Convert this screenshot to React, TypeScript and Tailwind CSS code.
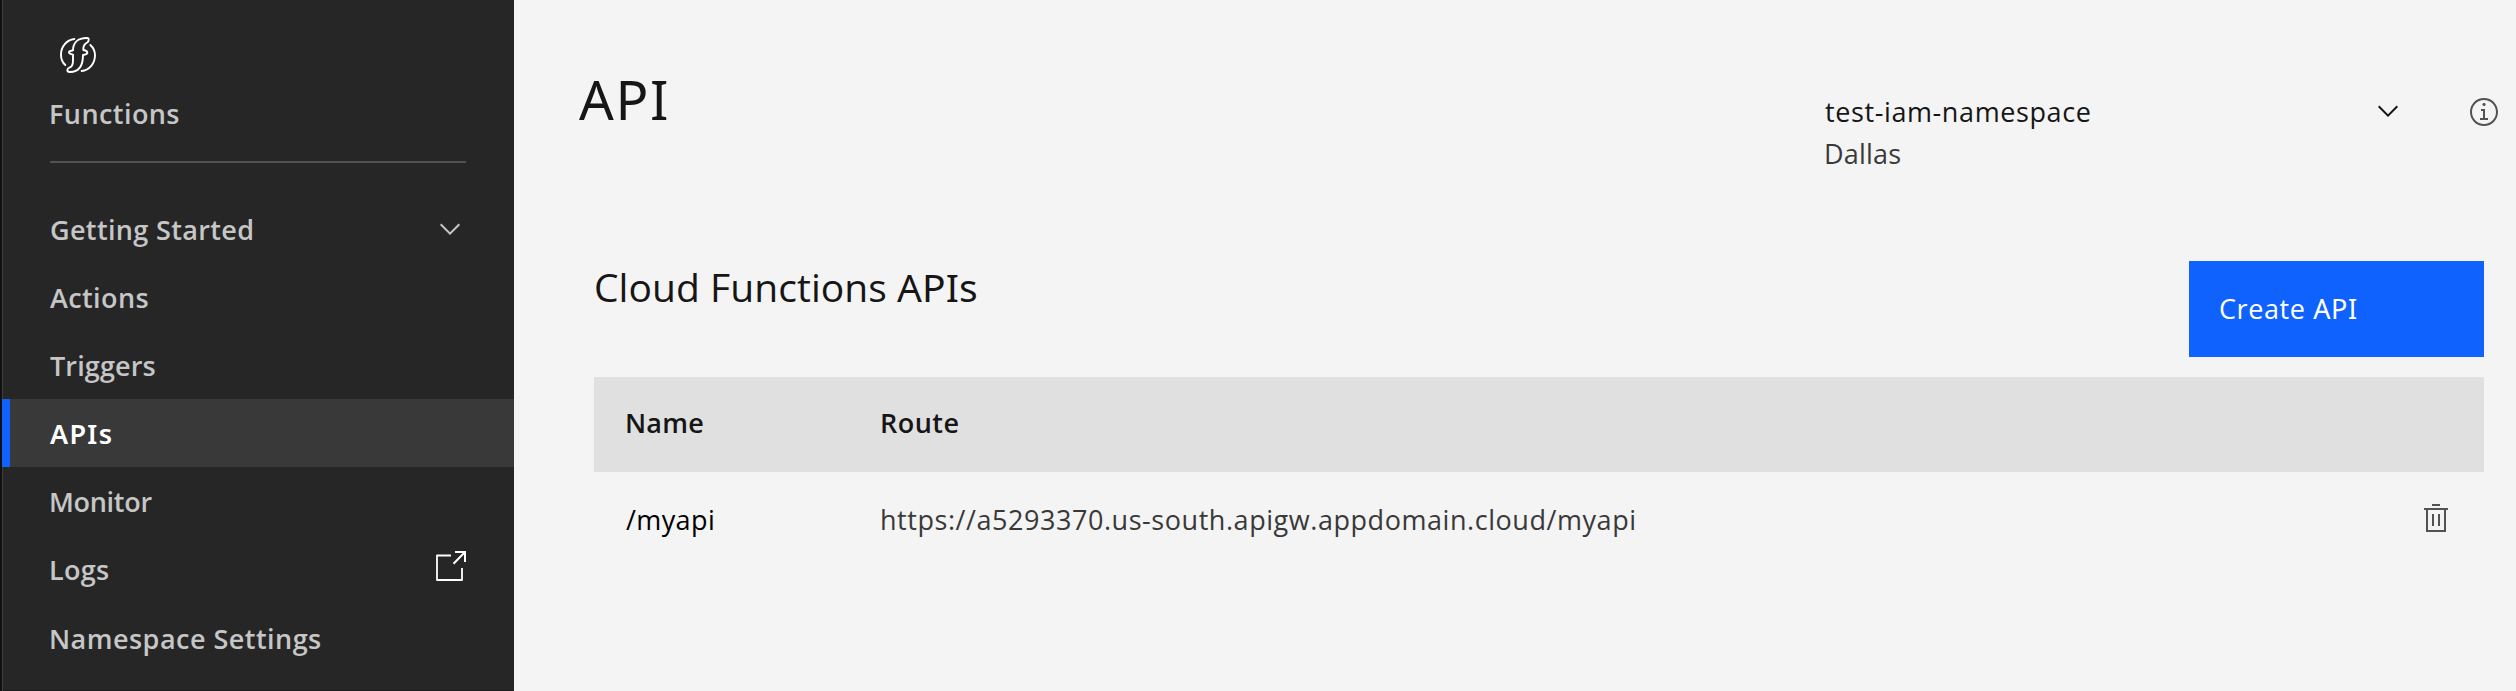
import React from "react";

function ChevronDown({ className }: { className: string }) {
  return (
    <svg viewBox="0 0 16 16" className={className} fill="currentColor" aria-hidden="true">
      <path d="M8 11L3 6 3.7 5.3 8 9.6 12.3 5.3 13 6z" />
    </svg>
  );
}

function FunctionsLogo() {
  return (
    <svg viewBox="0 0 108 108" className="size-9" fill="none" stroke="#fff" strokeWidth="5.8" strokeLinecap="round" strokeLinejoin="round" aria-hidden="true">
      <path d="M43 6C20 9 3 28 3 53C3 66 8 77 16 84" />
      <path d="M91 24C100 32 105 43 105 55C105 81 87 100 65 102" />
      <path d="M39 40C39 18 53 3 80 3C88 3 86 7 85 13C84 19 70 16 70 36V39C76 40 82 42 82 47C82 52 76 53 69 54C69 84 58 105 30 105C22 105 21 101 23 96C25 88 39 97 39 71V53C32 52 27 51 27 46C27 41 33 41 39 40Z" />
    </svg>
  );
}

function LaunchIcon() {
  return (
    <svg viewBox="0 0 30 30" className="size-[30px]" fill="none" stroke="#fff" strokeWidth="2" aria-hidden="true">
      <path d="M15 4.5H1V29H26V17" strokeWidth="1.8" strokeLinejoin="round" />
      <path d="M19 1H29V11M29 1L17.5 12.7" />
    </svg>
  );
}

function InfoIcon() {
  return (
    <svg viewBox="0 0 16 16" className="size-8" fill="#525252" aria-hidden="true">
      <path d="M8.5 11V6.5h-2v1h1V11H6v1h4v-1zM8 3.5c-.4 0-.8.3-.8.8s.4.7.8.7.8-.3.8-.8-.4-.7-.8-.7z" />
      <path d="M8 15c-3.9 0-7-3.1-7-7s3.1-7 7-7 7 3.1 7 7-3.1 7-7 7zM8 2C4.7 2 2 4.7 2 8s2.7 6 6 6 6-2.7 6-6-2.7-6-6-6z" />
    </svg>
  );
}

function TrashIcon() {
  return (
    <svg viewBox="0 0 32 32" className="size-8" fill="none" stroke="#525252" strokeWidth="2" aria-hidden="true">
      <path d="M12 3H20M4 7H28M7 7V29H25V7M13 12V24M19 12V24" />
    </svg>
  );
}

const navItems = [
  { label: "Getting Started", tracking: "pt-0.5 tracking-[0.36px]", icon: "chevron" },
  { label: "Actions", tracking: "pt-0.5 tracking-[0.39px]" },
  { label: "Triggers", tracking: "pt-0.5 tracking-[0.12px]" },
  { label: "APIs", tracking: "pt-0.5 tracking-[1.3px] font-['Noto_Sans',sans-serif]", active: true },
  { label: "Monitor", tracking: "-ml-px pt-0.5 tracking-[-0.3px]" },
  { label: "Logs", tracking: "-ml-px pt-0.5 tracking-[0.33px]", icon: "launch" },
  { label: "Namespace Settings", tracking: "-ml-px pt-1 tracking-[0.47px]" },
];

function Sidebar() {
  return (
    <aside className="flex w-[514px] shrink-0 flex-col border-l-2 border-[#111] bg-[#262626] font-semibold text-[#c6c6c6] shadow-[inset_1px_0_0_#3f3f3f,inset_0_-1px_0_#1c1c1c]">
      <div className="mx-12 flex h-[163px] flex-col border-b-2 border-[#525252] pt-[37px]">
        <div className="ml-2.5">
          <FunctionsLogo />
        </div>
        <span className="mt-[23px] -ml-px leading-9 tracking-[0.43px]">Functions</span>
      </div>
      <nav className="mt-8 flex flex-col">
        {navItems.map((item) => (
          <a
            key={item.label}
            className={
              item.active
                ? "flex h-[68px] items-center justify-between border-l-8 border-[#0f62fe] bg-[#393939] pr-12 pl-10 text-white"
                : "flex h-[68px] items-center justify-between pr-12 pl-12"
            }
          >
            <span className={item.tracking}>{item.label}</span>
            {item.icon === "chevron" && <ChevronDown className="size-8" />}
            {item.icon === "launch" && (
              <span className="pb-1.5">
                <LaunchIcon />
              </span>
            )}
          </a>
        ))}
      </nav>
    </aside>
  );
}

export default function App() {
  return (
    <div className="flex h-[691px] w-[2516px] overflow-hidden bg-[#f4f4f4] font-['Open_Sans',sans-serif] text-[27px] whitespace-nowrap text-[#161616]">
      <Sidebar />
      <main className="flex flex-1 flex-col">
        <header className="flex h-[237px] items-start justify-between pr-4 pl-[65px]">
          <h1 className="mt-[63px] font-['Noto_Sans',sans-serif] text-[54.5px] leading-[72px] tracking-[1.55px]">API</h1>
          <div className="mt-[91px] flex items-start">
            <div className="flex w-[547px] flex-col">
              <span className="leading-[42px] tracking-[0.6px]">test-iam-namespace</span>
              <span className="-ml-px leading-[42px] tracking-[0.2px] text-[#393939]">Dallas</span>
            </div>
            <ChevronDown className="mt-1 mr-16 size-8" />
            <div className="mt-[5px]">
              <InfoIcon />
            </div>
          </div>
        </header>
        <section className="flex flex-col pr-8 pl-20">
          <div className="flex h-[140px] items-start justify-between pt-6">
            <h2 className="text-[39px] leading-[52px] tracking-[0.05px]">
              Cloud Functions <span className="font-['Noto_Sans',sans-serif]">APIs</span>
            </h2>
            <button className="flex h-24 w-[295px] items-center bg-[#0f62fe] pl-[30px] text-left tracking-[0.6px] text-white">
              <span>
                Create <span className="font-['Noto_Sans',sans-serif]">API</span>
              </span>
            </button>
          </div>
          <table className="w-full table-fixed border-collapse text-left">
            <thead>
              <tr className="h-[95px] bg-[#e0e0e0]">
                <th className="w-[255px] pb-0.5 pl-[31px] font-semibold tracking-[0.2px]">Name</th>
                <th className="pb-0.5 pl-[31px] font-semibold tracking-[0.48px]">Route</th>
                <th className="w-24" />
              </tr>
            </thead>
            <tbody>
              <tr className="h-24">
                <td className="pl-8 tracking-[0.4px] text-black">/myapi</td>
                <td className="pl-[31px] tracking-[0.55px] text-[#393939]">https://a5293370.us-south.apigw.appdomain.cloud/myapi</td>
                <td className="pb-1 pl-8">
                  <TrashIcon />
                </td>
              </tr>
            </tbody>
          </table>
        </section>
      </main>
    </div>
  );
}
